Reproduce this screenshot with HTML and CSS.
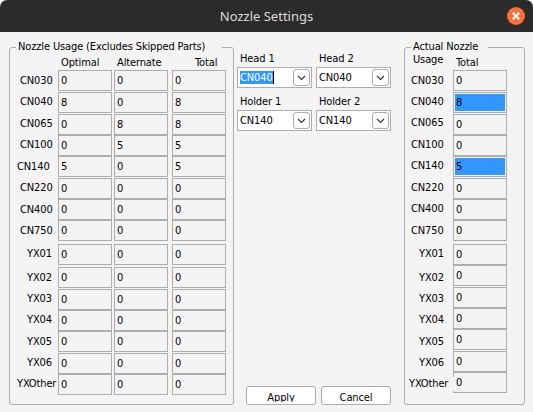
FILE: index.html
```html
<!DOCTYPE html>
<html lang="en">
<head>
<meta charset="utf-8">
<title>Nozzle Settings</title>
<link rel="stylesheet" href="styles.css">
</head>
<body>
<div class="window">
  <header class="titlebar">
    <h1>Nozzle Settings</h1>
    <svg class="close" width="18" height="18" viewBox="0 0 18 18"><circle cx="9" cy="9" r="9" fill="#fc7038"/><path d="M5.8 5.8l6.4 6.4M12.2 5.8l-6.4 6.4" stroke="#fff" stroke-width="2.1"/></svg>
  </header>
  <main class="content">
    <section class="group usage">
      <div class="legend">Nozzle Usage (Excludes Skipped Parts)</div>
      <div class="heads"><span>Optimal</span><span>Alternate</span><span>Total</span></div>
      <div class="rows">
        <label>CN030</label><i>0</i><i>0</i><i>0</i>
        <label class="u1">CN040</label><i>8</i><i>0</i><i>8</i>
        <label class="u1">CN065</label><i>0</i><i>8</i><i>8</i>
        <label class="u1">CN100</label><i>0</i><i>5</i><i>5</i>
        <label class="out">CN140</label><i>5</i><i>0</i><i>5</i>
        <label class="u1">CN220</label><i>0</i><i>0</i><i>0</i>
        <label>CN400</label><i>0</i><i>0</i><i>0</i>
        <label>CN750</label><i>0</i><i>0</i><i>0</i>
        <label class="yx u1">YX01</label><i>0</i><i>0</i><i>0</i>
        <label class="yx">YX02</label><i>0</i><i>0</i><i>0</i>
        <label class="yx u1">YX03</label><i>0</i><i>0</i><i>0</i>
        <label class="yx u1">YX04</label><i>0</i><i>0</i><i>0</i>
        <label class="yx">YX05</label><i>0</i><i>0</i><i>0</i>
        <label class="yx u1">YX06</label><i>0</i><i>0</i><i>0</i>
        <label class="out u1">YXOther</label><i>0</i><i>0</i><i>0</i>
      </div>
    </section>
    <section class="middle">
      <div class="combos">
        <div><span class="name">Head 1</span><div class="combo"><span class="selected">CN040</span><b><svg width="9" height="6" viewBox="0 0 9 6"><path d="M1 1l3.5 3.5L8 1"/></svg></b></div></div>
        <div><span class="name">Head 2</span><div class="combo"><span>CN040</span><b><svg width="9" height="6" viewBox="0 0 9 6"><path d="M1 1l3.5 3.5L8 1"/></svg></b></div></div>
        <div><span class="name">Holder 1</span><div class="combo"><span>CN140</span><b><svg width="9" height="6" viewBox="0 0 9 6"><path d="M1 1l3.5 3.5L8 1"/></svg></b></div></div>
        <div><span class="name">Holder 2</span><div class="combo"><span>CN140</span><b><svg width="9" height="6" viewBox="0 0 9 6"><path d="M1 1l3.5 3.5L8 1"/></svg></b></div></div>
      </div>
      <div class="buttons"><div class="button"><span>Apply</span></div><div class="button"><span>Cancel</span></div></div>
    </section>
    <section class="group actual">
      <div class="legend">Actual Nozzle</div>
      <div class="heads"><span class="wrap">Usage</span><span>Total</span></div>
      <div class="rows">
        <label>CN030</label><i>0</i>
        <label class="u1">CN040</label><i class="hit">8</i>
        <label class="u2">CN065</label><i>0</i>
        <label class="u1">CN100</label><i>0</i>
        <label class="u1">CN140</label><i class="hit">5</i>
        <label class="u1">CN220</label><i>0</i>
        <label class="u1">CN400</label><i>0</i>
        <label>CN750</label><i>0</i>
        <label class="yx u1">YX01</label><i>0</i>
        <label class="yx d2">YX02</label><i>0</i>
        <label class="yx d1">YX03</label><i>0</i>
        <label class="yx d1">YX04</label><i>0</i>
        <label class="yx d2">YX05</label><i>0</i>
        <label class="yx d1">YX06</label><i>0</i>
        <label class="out d1">YXOther</label><i>0</i>
      </div>
    </section>
  </main>
</div>
</body>
</html>
```
FILE: styles.css
```css
* { box-sizing: border-box; }
body {
  margin: 0;
  background: #fff;
  color: #000;
  font: 11px/14px "DejaVu Sans Condensed", "DejaVu Sans", sans-serif;
  font-stretch: condensed;
  letter-spacing: -0.13px;
}
.window {
  width: 533px;
  height: 412px;
  overflow: hidden;
  border-radius: 7px 7px 0 0;
  background: #f4f4f4;
}
.titlebar {
  display: grid;
  grid-template-columns: 26px 1fr 26px;
  align-items: center;
  height: 32px;
  background: #2b2b2b;
}
.titlebar h1 {
  grid-column: 2;
  margin: 0;
  text-align: center;
  color: #dcdcdc;
  font: 13px/18px "Noto Sans", sans-serif;
  letter-spacing: 0;
}
.content { display: flex; padding: 15px 0 0 9px; }
.group {
  height: 358px;
  border: 1px solid #adadad;
  border-radius: 3px;
}
.usage { width: 225px; }
.actual { width: 121px; margin-left: 13px; }
.legend {
  height: 14px;
  margin: -8px 0 0 6px;
  padding-left: 2px;
  background: #f4f4f4;
  white-space: nowrap;
}
.usage .legend { width: 206px; }
.actual .legend { width: 77px; }
.heads { display: grid; height: 16px; padding-top: 2px; }
.usage .heads { grid-template-columns: 56px 73px 40px; padding-left: 51px; }
.usage .heads span:last-child { margin-left: 5px; }
.actual .heads { grid-template-columns: 43px 1fr; padding-left: 8px; }
.wrap { margin-top: -3px; }
.rows { display: grid; }
.usage .rows {
  grid-template-columns: 54px 54px 54px 54px;
  grid-template-rows: 22px 22px 21px 21px 22px 21px 21px 24px 23px 22px 21px 21px 22px 21px 21px;
  column-gap: 2px;
  margin-left: -8px;
}
.usage .rows i:nth-child(4n) { margin: 0 -2px 0 2px; }
.actual .rows {
  grid-template-columns: 48px 54px;
  grid-template-rows: 22px 22px 21px 21px 22px 21px 21px 24px 21px 22px 21px 21px 22px 21px 21px;
}
.rows label { padding: 0 0 0 18px; margin-top: 4px; height: 14px; white-space: nowrap; }
.rows .yx { padding-left: 25px; }
.rows .out { padding-left: 15px; }
.actual .rows label { padding-left: 6px; }
.actual .rows .yx { padding-left: 14px; }
.actual .rows .out {
  z-index: 1;
  width: 49px;
  margin-right: -1px;
  padding-left: 4px;
  background: #f4f4f4;
}
.rows .u1 { margin-top: 3px; }
.rows .u2 { margin-top: 2px; }
.rows .d1 { margin-top: 5px; }
.rows .d2 { margin-top: 6px; }
.rows i {
  height: 21px;
  padding: 3px 0 0 2px;
  border: 1px solid #adadad;
  font-style: normal;
}
.rows .hit {
  padding: 1px;
  background: #3296ff content-box;
  line-height: 18px;
  text-indent: 1px;
}
.middle {
  display: flex;
  flex-direction: column;
  justify-content: space-between;
  width: 157px;
  height: 358px;
  padding: 5px 0 0 3px;
}
.combos { display: grid; grid-template-columns: 75px 75px; gap: 7px 4px; }
.name { display: block; height: 15px; padding-left: 3px; }
.combo {
  display: flex;
  align-items: center;
  justify-content: space-between;
  height: 21px;
  padding: 0 1px 0 2px;
  border: 1px solid #adadad;
  background: #fff;
}
.combo b {
  display: grid;
  place-items: center;
  width: 17px;
  height: 17px;
  border: 1px solid #adadad;
  border-radius: 3px;
}
.combo path { fill: none; stroke: #333; stroke-width: 1.1; }
.combo .selected {
  height: 13px;
  line-height: 13px;
  background: #3296ff;
  color: #fff;
  border-right: 1px solid #000;
}
.buttons { display: flex; gap: 5px; padding-left: 9px; }
.button {
  width: 70px;
  height: 19px;
  padding-top: 4px;
  border: 1px solid #adadad;
  border-radius: 3px;
  background: #fff;
  text-align: center;
}
.button span { display: block; height: 11px; overflow: hidden; }
```
